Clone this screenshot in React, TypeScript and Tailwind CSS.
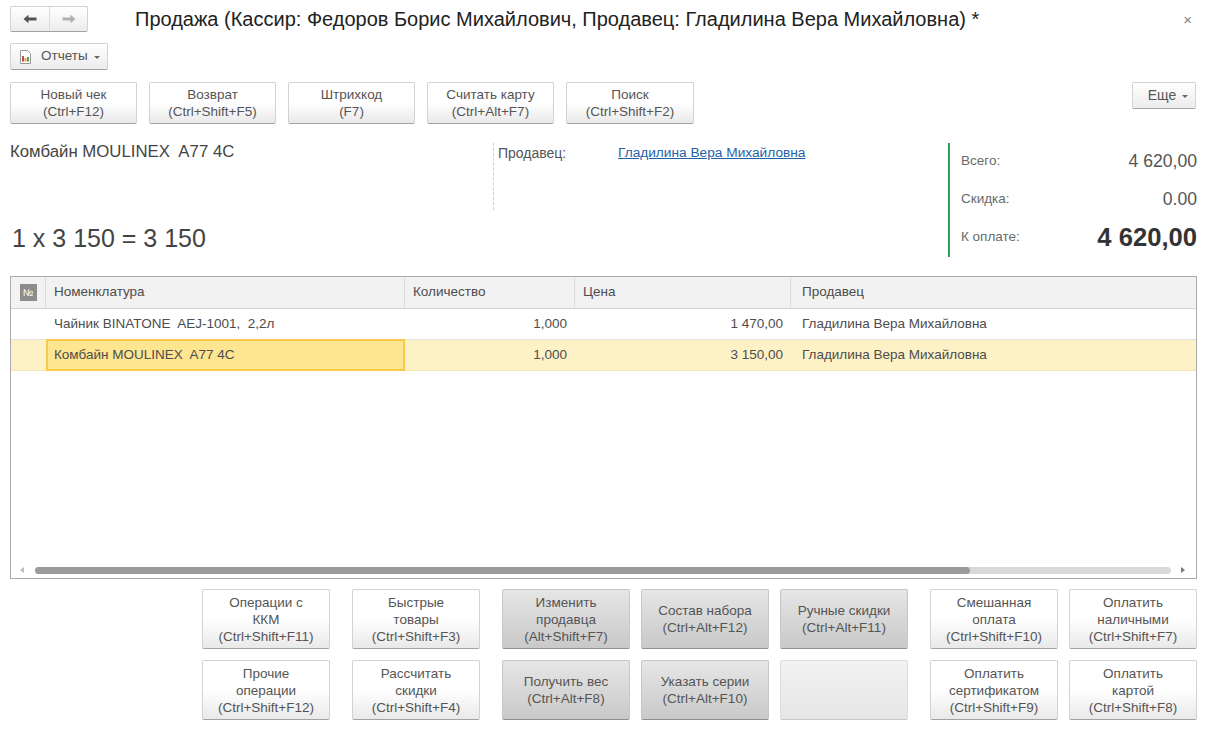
const topButtons = [
  { lines: ["Новый чек", "(Ctrl+F12)"], w: "w-[127px]" },
  { lines: ["Возврат", "(Ctrl+Shift+F5)"], w: "w-[127px]" },
  { lines: ["Штрихкод", "(F7)"], w: "w-[127px]" },
  { lines: ["Считать карту", "(Ctrl+Alt+F7)"], w: "w-[127px]" },
  { lines: ["Поиск", "(Ctrl+Shift+F2)"], w: "w-[128px]" },
];

const light = "border-[#d2d2d2] border-b-[#a3a3a3] from-white via-white to-[#e9e9e9]";
const dark = "border-[#c6c6c6] border-b-[#8f8f8f] from-[#e6e6e6] to-[#c9c9c9]";
const faded = "border-[#dedede] border-b-[#c8c8c8] from-[#f2f2f2] to-[#e6e6e6]";

function Button({ lines, className }: { lines: string[]; className: string }) {
  return (
    <button className={`flex flex-col items-center justify-center rounded-[2px] border bg-linear-to-b text-[13.5px] leading-[17px] text-[#555] ${className}`}>
      {lines.map((l) => (
        <span key={l}>{l}</span>
      ))}
    </button>
  );
}

function Caret() {
  return <span className="ml-[6px] mt-[2px] inline-block border-x-[3px] border-t-[3px] border-x-transparent border-t-[#666]" />;
}

function Arrow({ flip, color }: { flip?: boolean; color: string }) {
  return (
    <svg width="14" height="10" viewBox="0 0 14 10" className={flip ? "rotate-180" : ""}>
      <path d="M0.5 5 L5.5 0.8 L5.5 3.6 L13.5 3.6 L13.5 6.4 L5.5 6.4 L5.5 9.2 Z" fill={color} />
    </svg>
  );
}

function ReportIcon() {
  return (
    <svg width="13" height="14" viewBox="0 0 13 14">
      <path d="M1.5 0.5 H8.5 L11.5 3.5 V13.5 H1.5 Z" fill="#fff" stroke="#9a9a9a" />
      <rect x="3" y="6" width="2" height="5.5" fill="#c0504d" />
      <rect x="5.5" y="8" width="2" height="3.5" fill="#d9a441" />
      <rect x="8" y="7" width="2" height="4.5" fill="#5f9e4c" />
    </svg>
  );
}

const cols = ["w-[35px]", "w-[359px]", "w-[170px]", "w-[216px]", "flex-1"];

function Row({ name, qty, price, selected }: { name: string; qty: string; price: string; selected?: boolean }) {
  return (
    <div className={`flex h-[31px] items-stretch border-b text-[13.5px] ${selected ? "border-[#f3e6b4] bg-[#fdf2c6]" : "border-[#e2e2e2] bg-white"}`}>
      <div className={cols[0]} />
      <div className={`${cols[1]} flex items-center whitespace-pre ${selected ? "my-[-1px] border-2 border-[#f5cb4a] bg-[#fee590] pl-[6px]" : "pl-[8px]"}`}>{name}</div>
      <div className={`${cols[2]} flex items-center justify-end pr-[8px]`}>{qty}</div>
      <div className={`${cols[3]} flex items-center justify-end pr-[8px]`}>{price}</div>
      <div className={`${cols[4]} flex items-center pl-[11px]`}>Гладилина Вера Михайловна</div>
    </div>
  );
}

export default function App() {
  return (
    <div className="h-[731px] w-[1213px] overflow-hidden bg-white pl-[10px] pr-[16px] pt-[6px] font-['Liberation_Sans',Arial,sans-serif] text-[13.5px] text-[#4d4d4d]">
      <div className="relative flex h-[26px] items-center">
        <div className="flex h-[26px] w-[78px] rounded-[2px] border border-[#d2d2d2] border-b-[#a3a3a3] bg-linear-to-b from-white to-[#ececec]">
          <div className="flex w-[39px] items-center justify-center border-r border-[#dcdcdc]">
            <Arrow color="#555" />
          </div>
          <div className="flex flex-1 items-center justify-center">
            <Arrow flip color="#b0b0b0" />
          </div>
        </div>
        <h1 className="ml-[47px] whitespace-nowrap text-[20px] font-normal text-[#222]">
          Продажа (Кассир: Федоров Борис Михайлович, Продавец: Гладилина Вера Михайловна) *
        </h1>
        <span className="absolute right-[5px] top-[6px] text-[15px] leading-none text-[#808080]">×</span>
      </div>

      <button className="mt-[11px] flex h-[27px] w-[98px] items-center rounded-[2px] border border-[#d2d2d2] border-b-[#a3a3a3] bg-linear-to-b from-white to-[#ececec] pl-[8px] text-[#555]">
        <ReportIcon />
        <span className="ml-[9px]">Отчеты</span>
        <Caret />
      </button>

      <div className="mt-[12px] flex h-[42px] items-start pr-[1px]">
        <div className="flex gap-[12px]">
          {topButtons.map((b) => (
            <Button key={b.lines[0]} lines={b.lines} className={`h-[42px] ${b.w} ${light}`} />
          ))}
        </div>
        <button className="ml-auto flex h-[27px] w-[64px] items-center justify-center rounded-[2px] border border-[#d2d2d2] border-b-[#a3a3a3] bg-linear-to-b from-white to-[#ececec] pl-[8px] text-[14px] text-[#555]">
          Еще
          <Caret />
        </button>
      </div>

      <div className="mt-[19px] flex h-[133px]">
        <div className="flex h-[107px] w-[483px] flex-col justify-between text-[#444]">
          <div className="text-[16.8px] leading-[18px]">Комбайн MOULINEX&nbsp; A77 4C</div>
          <div className="ml-[2px] text-[25px] leading-[24px]">1 x 3 150 = 3 150</div>
        </div>
        <div className="flex h-[67px] w-[455px] border-l border-dashed border-[#cfcfcf] pl-[4px] pt-[1px]">
          <span className="w-[120px] text-[14px] leading-[18px] text-[#555]">Продавец:</span>
          <a className="text-[13.7px] leading-[18px] text-[#1f5fa8] underline">Гладилина Вера Михайловна</a>
        </div>
        <div className="flex h-[114px] flex-1 flex-col border-l-2 border-[#2aa05a] pl-[11px]">
          <div className="flex h-[37px] items-center justify-between">
            <span className="text-[#6a6a6a]">Всего:</span>
            <span className="text-[17.6px] text-[#555]">4 620,00</span>
          </div>
          <div className="flex h-[38px] items-center justify-between">
            <span className="text-[#6a6a6a]">Скидка:</span>
            <span className="text-[17.6px] text-[#555]">0.00</span>
          </div>
          <div className="flex h-[38px] items-center justify-between">
            <span className="text-[#6a6a6a]">К оплате:</span>
            <span className="text-[25.6px] font-bold text-[#333]">4 620,00</span>
          </div>
        </div>
      </div>

      <div className="flex h-[303px] flex-col border border-[#ababab]">
        <div className="flex h-[32px] items-stretch border-b border-[#d4d4d4] bg-[#f2f2f2]">
          <div className={`${cols[0]} flex items-center justify-center border-r border-[#dcdcdc]`}>
            <span className="flex h-[17px] w-[17px] items-center justify-center bg-[#8c8c8c] text-[10px] text-white">№</span>
          </div>
          <div className={`${cols[1]} flex items-center border-r border-[#dcdcdc] pl-[8px]`}>Номенклатура</div>
          <div className={`${cols[2]} flex items-center border-r border-[#dcdcdc] pl-[8px]`}>Количество</div>
          <div className={`${cols[3]} flex items-center border-r border-[#dcdcdc] pl-[8px]`}>Цена</div>
          <div className={`${cols[4]} flex items-center pl-[11px]`}>Продавец</div>
        </div>
        <Row name="Чайник BINATONE  AEJ-1001,  2,2л" qty="1,000" price="1 470,00" />
        <Row name="Комбайн MOULINEX  A77 4C" qty="1,000" price="3 150,00" selected />
        <div className="flex-1" />
        <div className="flex h-[14px] items-center pb-[2px]">
          <span className="ml-[9px] h-0 w-0 border-y-[3px] border-r-[4px] border-y-transparent border-r-[#bdbdbd]" />
          <div className="ml-[11px] h-[7px] w-[1136px] rounded-full bg-[#d9d9d9]">
            <div className="h-full w-[935px] rounded-full bg-[#9b9b9b]" />
          </div>
          <span className="ml-[10px] h-0 w-0 border-y-[3px] border-l-[4px] border-y-transparent border-l-[#777]" />
        </div>
      </div>

      <div className="ml-[192px] mt-[10px] flex gap-[22px]">
        <div className="grid grid-cols-[128px_128px] gap-x-[22px] gap-y-[11px]">
          <Button lines={["Операции с", "ККМ", "(Ctrl+Shift+F11)"]} className={`h-[60px] ${light}`} />
          <Button lines={["Быстрые", "товары", "(Ctrl+Shift+F3)"]} className={`h-[60px] ${light}`} />
          <Button lines={["Прочие", "операции", "(Ctrl+Shift+F12)"]} className={`h-[60px] ${light}`} />
          <Button lines={["Рассчитать", "скидки", "(Ctrl+Shift+F4)"]} className={`h-[60px] ${light}`} />
        </div>
        <div className="grid grid-cols-[128px_128px_128px] gap-x-[11px] gap-y-[11px]">
          <Button lines={["Изменить", "продавца", "(Alt+Shift+F7)"]} className={`h-[60px] ${dark}`} />
          <Button lines={["Состав набора", "(Ctrl+Alt+F12)"]} className={`h-[60px] ${dark}`} />
          <Button lines={["Ручные скидки", "(Ctrl+Alt+F11)"]} className={`h-[60px] ${dark}`} />
          <Button lines={["Получить вес", "(Ctrl+Alt+F8)"]} className={`h-[60px] ${dark}`} />
          <Button lines={["Указать серии", "(Ctrl+Alt+F10)"]} className={`h-[60px] ${dark}`} />
          <Button lines={[]} className={`h-[60px] ${faded}`} />
        </div>
        <div className="grid grid-cols-[128px_128px] gap-x-[11px] gap-y-[11px]">
          <Button lines={["Смешанная", "оплата", "(Ctrl+Shift+F10)"]} className={`h-[60px] ${light}`} />
          <Button lines={["Оплатить", "наличными", "(Ctrl+Shift+F7)"]} className={`h-[60px] ${light}`} />
          <Button lines={["Оплатить", "сертификатом", "(Ctrl+Shift+F9)"]} className={`h-[60px] ${light}`} />
          <Button lines={["Оплатить", "картой", "(Ctrl+Shift+F8)"]} className={`h-[60px] ${light}`} />
        </div>
      </div>
    </div>
  );
}
